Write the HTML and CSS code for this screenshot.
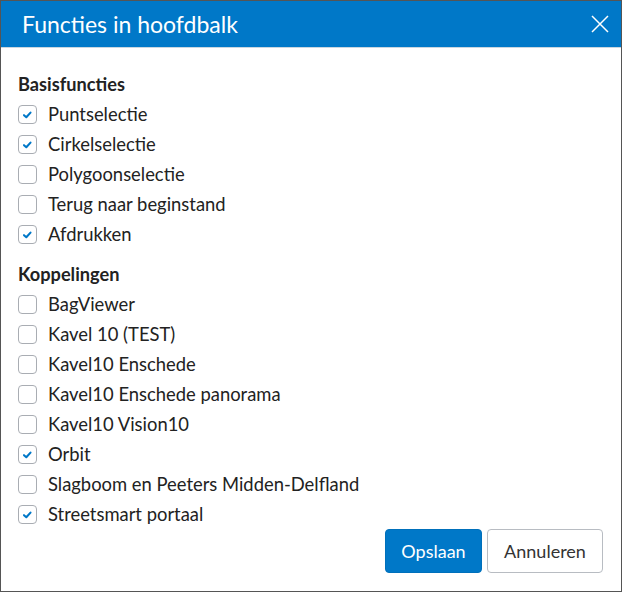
FILE: index.html
```html
<!DOCTYPE html>
<html lang="nl">
<head>
<meta charset="utf-8">
<title>Functies in hoofdbalk</title>
<link rel="stylesheet" href="styles.css">
</head>
<body>
<div class="dialog">
  <div class="header">
    <h1 class="title">Functies in hoofdbalk</h1>
    <button class="close" aria-label="Sluiten">
      <svg width="18" height="18" viewBox="0 0 18 18"><path d="M1 1 L17 17 M17 1 L1 17" stroke="#fff" stroke-width="1.5" fill="none"/></svg>
    </button>
  </div>
  <div class="content">
    <section class="group">
      <div class="group-title">Basisfuncties</div>
      <label class="row"><span class="box checked"></span>Puntselectie</label>
      <label class="row"><span class="box checked"></span>Cirkelselectie</label>
      <label class="row"><span class="box"></span>Polygoonselectie</label>
      <label class="row"><span class="box"></span>Terug naar beginstand</label>
      <label class="row"><span class="box checked"></span>Afdrukken</label>
    </section>
    <section class="group">
      <div class="group-title">Koppelingen</div>
      <label class="row"><span class="box"></span>BagViewer</label>
      <label class="row"><span class="box"></span>Kavel 10 (TEST)</label>
      <label class="row"><span class="box"></span>Kavel10 Enschede</label>
      <label class="row"><span class="box"></span>Kavel10 Enschede panorama</label>
      <label class="row"><span class="box"></span>Kavel10 Vision10</label>
      <label class="row"><span class="box checked"></span>Orbit</label>
      <label class="row"><span class="box"></span>Slagboom en Peeters Midden-Delfland</label>
      <label class="row"><span class="box checked"></span>Streetsmart portaal</label>
    </section>
    <div class="footer">
      <button class="btn primary">Opslaan</button>
      <button class="btn secondary">Annuleren</button>
    </div>
  </div>
</div>
</body>
</html>
```
FILE: styles.css
```css
* { box-sizing: border-box; }
html, body { margin: 0; padding: 0; background: #fff; }
body { font-family: Lato, "Open Sans", sans-serif; color: #222; }
.dialog {
  width: 622px;
  height: 592px;
  border: 1px solid #555;
  display: flex;
  flex-direction: column;
}
.header {
  height: 47px;
  background: #0078c8;
  border-bottom: 1px solid #c9d6e0;
  display: flex;
  align-items: center;
  justify-content: space-between;
  padding: 0 11px 0 21px;
}
.title {
  margin: 0;
  font-size: 23px;
  font-weight: 400;
  color: #fff;
}
.close {
  background: none;
  border: 0;
  padding: 0;
  width: 20px;
  height: 20px;
  display: flex;
  align-items: center;
  justify-content: center;
}
.content {
  flex: 1;
  display: flex;
  flex-direction: column;
  padding: 21px 18px 18px 17px;
}
.group { display: flex; flex-direction: column; }
.group + .group { margin-top: 10px; }
.group-title {
  height: 30px;
  line-height: 30px;
  font-size: 18.2px;
  font-weight: 700;
  color: #222;
}
.row {
  height: 30px;
  display: flex;
  align-items: center;
  font-size: 18.4px;
  color: #222;
}
.box {
  width: 19px;
  height: 19px;
  border: 1px solid #a9adb3;
  border-radius: 4px;
  margin-right: 11px;
  flex: none;
  background: #fff;
}
.box.checked {
  background-image: url("data:image/svg+xml;utf8,<svg xmlns='http://www.w3.org/2000/svg' width='17' height='17' viewBox='0 0 17 17'><path d='M5 9.2 L7.3 11.2 L11.5 6.6' stroke='%230078c8' stroke-width='2.1' fill='none' stroke-linecap='round' stroke-linejoin='round'/></svg>");
  background-repeat: no-repeat;
  background-position: center;
}
.footer {
  display: flex;
  justify-content: flex-end;
  gap: 5px;
}
.btn {
  height: 44px;
  font-family: inherit;
  font-size: 18px;
  border-radius: 4px;
  padding: 0;
}
.primary {
  width: 97px;
  background: #0078c8;
  border: 1px solid #0070bb;
  color: #fff;
}
.secondary {
  width: 116px;
  background: #fff;
  border: 1px solid #b8bcc2;
  color: #333;
}
```
